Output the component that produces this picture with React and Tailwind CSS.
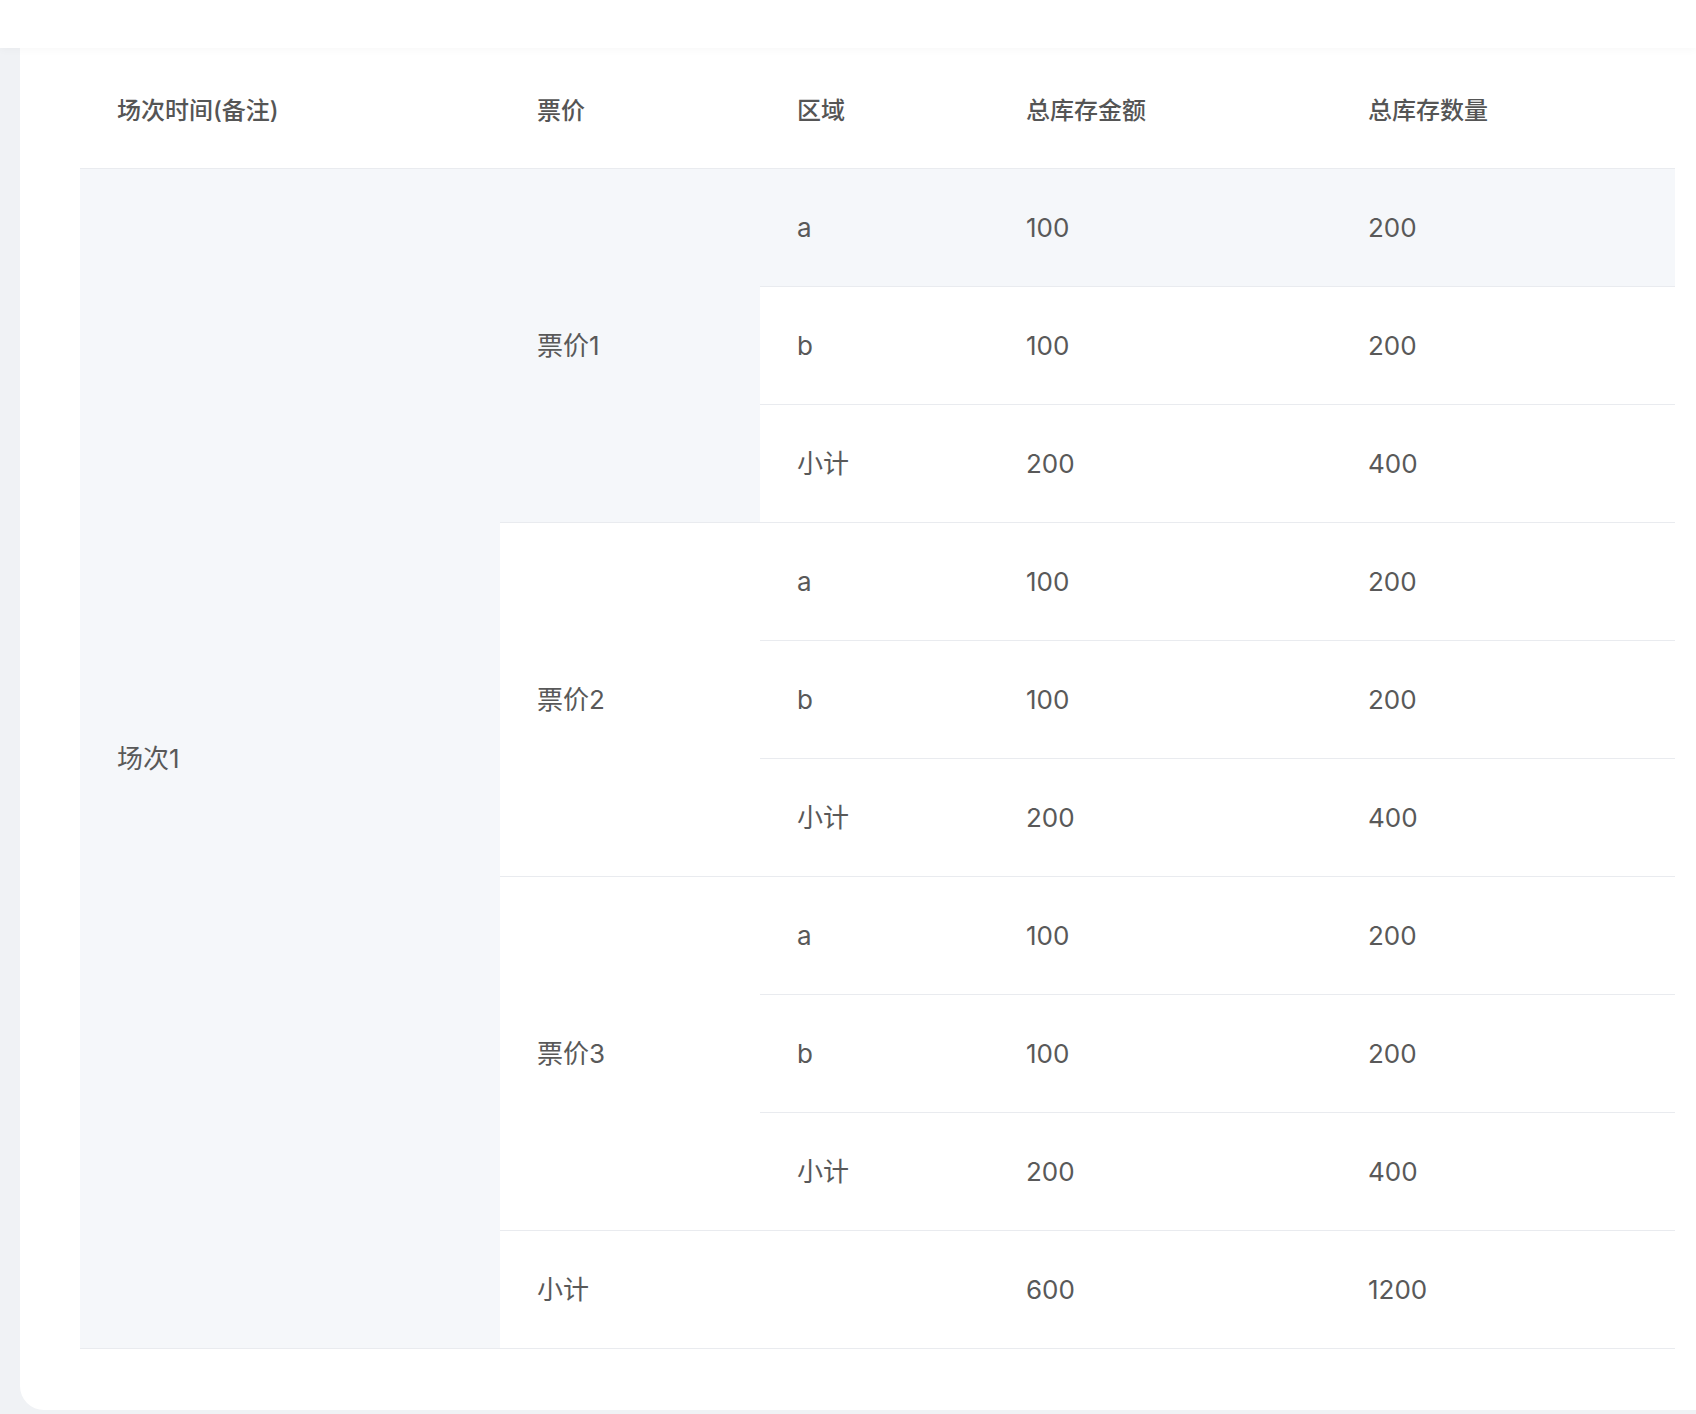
const GROUPS = [
  { price: '票价1', rows: [['a', '100', '200'], ['b', '100', '200'], ['小计', '200', '400']] },
  { price: '票价2', rows: [['a', '100', '200'], ['b', '100', '200'], ['小计', '200', '400']] },
  { price: '票价3', rows: [['a', '100', '200'], ['b', '100', '200'], ['小计', '200', '400']] },
]

const HEADERS = ['场次时间(备注)', '票价', '区域', '总库存金额', '总库存数量']

const cell = 'h-[118px] pl-[37px] border-b border-[#e9ebef] align-middle'

export default function App() {
  return (
    <div
      className="min-h-screen bg-[#f0f2f5] text-[#595959]"
      style={{ fontFamily: 'Inter, "Noto Sans CJK SC", sans-serif' }}
    >
      {/* Top bar */}
      <div className="relative z-10 h-12 bg-white shadow-[0_2px_8px_rgba(0,0,0,0.03)]" />

      <div className="pl-5">
        <div className="bg-white rounded-bl-[24px] pl-[60px] pr-[21px] pb-[61px]">
          <table className="w-full table-fixed border-separate border-spacing-0">
            <colgroup>
              <col className="w-[420px]" />
              <col className="w-[260px]" />
              <col className="w-[229px]" />
              <col className="w-[342px]" />
              <col className="w-[344px]" />
            </colgroup>
            <thead>
              <tr>
                {HEADERS.map((h) => (
                  <th
                    key={h}
                    className="h-[121px] pt-[6px] pl-[37px] text-left align-middle text-[24px] font-medium text-[#555] border-b border-[#e9ebef]"
                  >
                    {h}
                  </th>
                ))}
              </tr>
            </thead>
            <tbody className="text-[26px]">
              {GROUPS.map((g, gi) =>
                g.rows.map((r, ri) => {
                  const hover = gi === 0 && ri === 0
                  const bg = hover ? 'bg-[#f5f7fa]' : 'bg-white'
                  return (
                    <tr key={`${gi}-${ri}`}>
                      {gi === 0 && ri === 0 && (
                        <td rowSpan={10} className={`${cell} bg-[#f5f7fa]`}>
                          场次1
                        </td>
                      )}
                      {ri === 0 && (
                        <td rowSpan={3} className={`${cell} ${gi === 0 ? 'bg-[#f5f7fa]' : 'bg-white'}`}>
                          {g.price}
                        </td>
                      )}
                      <td className={`${cell} ${bg}`}>{r[0]}</td>
                      <td className={`${cell} ${bg}`}>{r[1]}</td>
                      <td className={`${cell} ${bg}`}>{r[2]}</td>
                    </tr>
                  )
                })
              )}
              <tr>
                <td colSpan={2} className={`${cell} bg-white`}>
                  小计
                </td>
                <td className={`${cell} bg-white`}>600</td>
                <td className={`${cell} bg-white`}>1200</td>
              </tr>
            </tbody>
          </table>
        </div>
      </div>
    </div>
  )
}
